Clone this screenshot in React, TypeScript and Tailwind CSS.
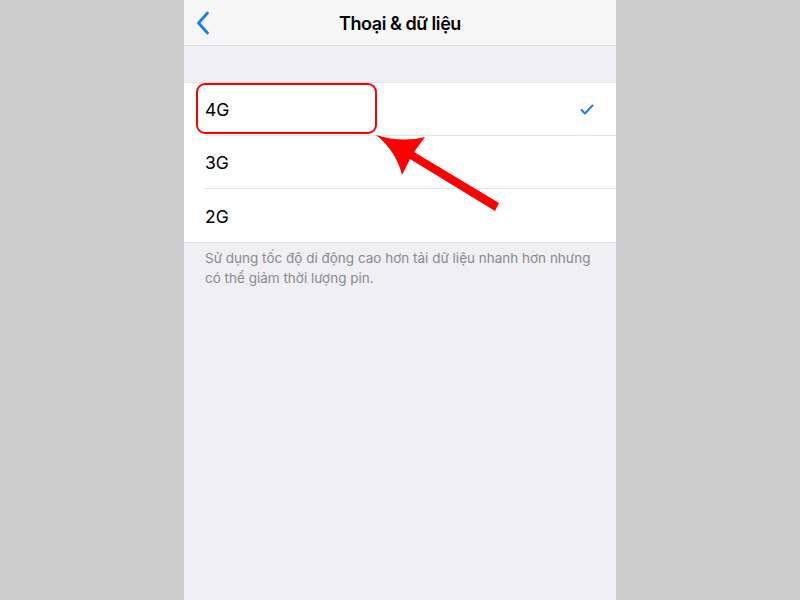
import React from 'react'

const rows = ['4G', '3G', '2G']

export default function App() {
  return (
    <div className="relative w-[800px] h-[600px] bg-[#cccccc] flex justify-center overflow-hidden" style={{ fontFamily: 'Inter, "Noto Sans", sans-serif' }}>
      <div className="relative w-[432px] h-full bg-[#efeff4]">
        {/* nav bar */}
        <div className="relative h-[46px] bg-[#f7f7f8] border-b border-[#dcdce0] flex items-center justify-center">
          <svg className="absolute left-[12px] top-[11px]" width="15" height="24" viewBox="0 0 15 24">
            <path d="M11.5 2 L2.5 12 L11.5 22" fill="none" stroke="#1a7ef2" strokeWidth="2.8" strokeLinecap="round" strokeLinejoin="round" />
          </svg>
          <h1 className="text-[18px] font-semibold text-black tracking-tight pt-[1px]">Thoại &amp; dữ liệu</h1>
        </div>

        <div className="h-[36px]" />

        {/* options */}
        <div className="bg-white border-t border-[#e4e4e8] border-b">
          {rows.map((r, i) => (
            <div key={r} className="pl-[21px] h-[53px] flex">
              <div className={`flex-1 flex items-center justify-between pr-[22px] pt-[3px] ${i < rows.length - 1 ? 'border-b border-[#e4e4e8]' : ''}`}>
                <span className="text-[17.5px] text-black">{r}</span>
                {i === 0 && (
                  <svg width="14" height="11" viewBox="0 0 14 11" className="-mt-[2px]">
                    <path d="M1.5 6 L5 9.5 L12.5 1.5" fill="none" stroke="#1a7ef2" strokeWidth="2" strokeLinecap="round" strokeLinejoin="round" />
                  </svg>
                )}
              </div>
            </div>
          ))}
        </div>

        <p className="px-[21px] pt-[5px] text-[13.5px] leading-[20px] text-[#8a8a8f]">
          Sử dụng tốc độ di động cao hơn tải dữ liệu nhanh hơn nhưng có thể giảm thời lượng pin.
        </p>

        {/* highlight box */}
        <div className="absolute left-[12px] top-[83px] w-[181px] h-[51px] border-2 border-[#ff0000] rounded-[9px]" />
      </div>

      {/* arrow */}
      <svg className="absolute left-0 top-0" width="800" height="600" viewBox="0 0 800 600">
        <path
          d="M376 135 Q402 143 425 137 L414 152 L499 203 L495 211 L410 159 L402 175 Q396 151 376 135 Z"
          fill="#ff0000"
        />
      </svg>
    </div>
  )
}
